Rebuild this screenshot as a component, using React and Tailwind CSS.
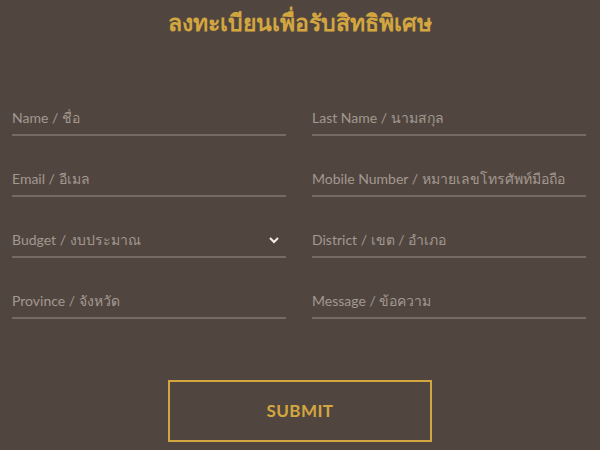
const fields = [
  ["Name / ชื่อ", "Last Name / นามสกุล"],
  ["Email / อีเมล", "Mobile Number / หมายเลขโทรศัพท์มือถือ"],
  ["Budget / งบประมาณ", "District / เขต / อำเภอ"],
  ["Province / จังหวัด", "Message / ข้อความ"],
];

const Field = ({ label, select }) => {
  return (
    <div className="h-[36px] flex items-end justify-between pb-[6px] border-b-2 border-[#766b64]">
      <span className="text-[14px] leading-[20px] text-[#a39891]">{label}</span>
      {select && (
        <svg width="12" height="12" viewBox="0 0 12 12" className="mb-[4px] mr-[6px]">
          <path d="M2 4 L6 8 L10 4" fill="none" stroke="#f2ede9" strokeWidth="2" />
        </svg>
      )}
    </div>
  );
};

const App = () => {
  return (
    <div
      className="w-[600px] h-[450px] bg-[#51463f] overflow-hidden"
      style={{ fontFamily: '"Lato", "Noto Sans", "Open Sans", sans-serif' }}
    >
      <h1 className="pt-[7px] text-center text-[23px] leading-[30px] font-bold text-[#d4a640]">
        ลงทะเบียนเพื่อรับสิทธิพิเศษ
      </h1>
      <div className="mt-[63px] pl-[12px] pr-[14px] grid grid-cols-2 gap-x-[26px] gap-y-[25px]">
        {fields.map(([a, b], i) => (
          <div key={i} className="contents">
            <Field label={a} select={i === 2} />
            <Field label={b} />
          </div>
        ))}
      </div>
      <div className="mt-[61px] flex justify-center">
        <button className="w-[264px] h-[62px] border-2 border-[#d4a640] text-[#d4a640] text-[17px] font-bold tracking-wide">
          SUBMIT
        </button>
      </div>
    </div>
  );
};

export default App;
